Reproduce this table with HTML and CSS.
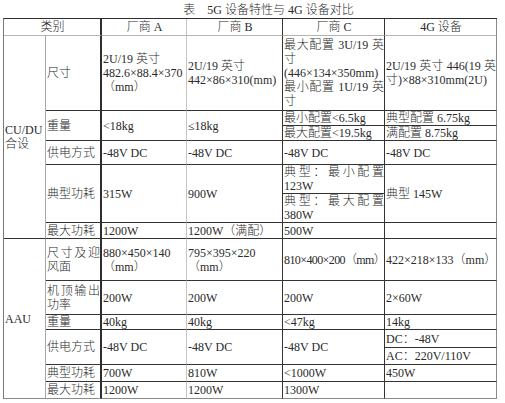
FILE: index.html
```html
<!DOCTYPE html>
<html lang="zh-CN">
<head>
<meta charset="utf-8">
<title>5G 设备特性与 4G 设备对比</title>
<link rel="stylesheet" href="styles.css">
</head>
<body>
<div class="page">
  <div class="title">表　5G 设备特性与 4G 设备对比</div>
  <table class="spec">
    <colgroup>
      <col class="c-cat"><col class="c-item"><col class="c-a"><col class="c-b"><col class="c-c"><col class="c-4g">
    </colgroup>
    <thead>
      <tr class="r-head">
        <th colspan="2" class="item">类别</th>
        <th class="va">厂商 A</th>
        <th class="vb">厂商 B</th>
        <th class="vc">厂商 C</th>
        <th class="v4">4G 设备</th>
      </tr>
    </thead>
    <tbody>
      <tr class="r-size">
        <td rowspan="7" class="cat">CU/DU<br>合设</td>
        <td class="item">尺寸</td>
        <td class="va">2U/19 英寸<br>482.6×88.4×370<br>（mm）</td>
        <td class="vb">2U/19 英寸<br>442×86×310(mm)</td>
        <td class="vc"><span class="just">最大配置 3U/19 英</span>寸<br>(446×134×350mm)<br><span class="just">最小配置 1U/19 英</span>寸</td>
        <td class="v4"><span class="just">2U/19 英寸 446(19 英</span>寸)×88×310mm(2U)</td>
      </tr>
      <tr class="r-w1">
        <td rowspan="2" class="item">重量</td>
        <td rowspan="2" class="va">&lt;18kg</td>
        <td rowspan="2" class="vb">≤18kg</td>
        <td class="vc">最小配置&lt;6.5kg</td>
        <td class="v4">典型配置 6.75kg</td>
      </tr>
      <tr class="r-w2">
        <td class="vc">最大配置&lt;19.5kg</td>
        <td class="v4">满配置 8.75kg</td>
      </tr>
      <tr class="r-pwr">
        <td class="item">供电方式</td>
        <td class="va">-48V DC</td>
        <td class="vb">-48V DC</td>
        <td class="vc">-48V DC</td>
        <td class="v4">-48V DC</td>
      </tr>
      <tr class="r-t1">
        <td rowspan="2" class="item">典型功耗</td>
        <td rowspan="2" class="va">315W</td>
        <td rowspan="2" class="vb">900W</td>
        <td class="vc"><span class="just">典型：最小配置</span>123W</td>
        <td rowspan="2" class="v4">典型 145W</td>
      </tr>
      <tr class="r-t2">
        <td class="vc"><span class="just">典型：最大配置</span>380W</td>
      </tr>
      <tr class="r-max">
        <td class="item">最大功耗</td>
        <td class="va">1200W</td>
        <td class="vb">1200W（满配）</td>
        <td class="vc">500W</td>
        <td class="v4"></td>
      </tr>
      <tr class="r-asize">
        <td rowspan="7" class="cat last">AAU</td>
        <td class="item"><span class="just">尺寸及迎</span>风面</td>
        <td class="va">880×450×140<br>（mm）</td>
        <td class="vb">795×395×220<br>（mm）</td>
        <td class="vc"><span class="tight">810×400×200（mm）</span></td>
        <td class="v4">422×218×133（mm）</td>
      </tr>
      <tr class="r-aout">
        <td class="item"><span class="just">机顶输出</span>功率</td>
        <td class="va">200W</td>
        <td class="vb">200W</td>
        <td class="vc">200W</td>
        <td class="v4">2×60W</td>
      </tr>
      <tr class="r-aw">
        <td class="item">重量</td>
        <td class="va">40kg</td>
        <td class="vb">40kg</td>
        <td class="vc">&lt;47kg</td>
        <td class="v4">14kg</td>
      </tr>
      <tr class="r-ap1">
        <td rowspan="2" class="item">供电方式</td>
        <td rowspan="2" class="va">-48V DC</td>
        <td rowspan="2" class="vb">-48V DC</td>
        <td rowspan="2" class="vc">-48V DC</td>
        <td class="v4">DC：-48V</td>
      </tr>
      <tr class="r-ap2">
        <td class="v4">AC：220V/110V</td>
      </tr>
      <tr class="r-at">
        <td class="item">典型功耗</td>
        <td class="va">700W</td>
        <td class="vb">810W</td>
        <td class="vc">&lt;1000W</td>
        <td class="v4">450W</td>
      </tr>
      <tr class="r-amax last-row">
        <td class="item">最大功耗</td>
        <td class="va">1200W</td>
        <td class="vb">1200W</td>
        <td class="vc">1300W</td>
        <td class="v4"></td>
      </tr>
    </tbody>
  </table>
</div>
</body>
</html>
```

FILE: styles.css
```css
html, body {
  margin: 0;
  padding: 0;
  background: #ffffff;
}

.page {
  width: 505px;
  padding: 0 0 0 3px;
  box-sizing: border-box;
  font-family: "Liberation Serif", "Noto Sans CJK SC", serif;
  font-size: 12px;
  font-weight: 300;
  line-height: 14px;
  color: #2a2a2a;
}

.title {
  padding: 3px 0 0 29px;
  height: 15px;
  line-height: 15px;
  text-align: center;
  white-space: nowrap;
}

.spec {
  border-collapse: separate;
  border-spacing: 0;
  table-layout: fixed;
  width: 494px;
  border-top: 1px solid #2e2e2e;
  border-left: 1px solid #7a7a7a;
}

.c-cat { width: 42px; }
.c-item { width: 56px; }
.c-a { width: 85px; }
.c-b { width: 96px; }
.c-c { width: 102px; }
.c-4g { width: 112px; }

.spec th,
.spec td {
  padding: 0 0 0 1px;
  border-right: 1px solid #333333;
  border-bottom: 1px solid #333333;
  font-weight: 300;
  vertical-align: middle;
  text-align: left;
  overflow: hidden;
}

.spec th {
  text-align: center;
  border-bottom-color: #b4b4b4;
}

.spec .cat {
  border-right-color: #a8a8a8;
}

.spec .item {
  border-right: 2px solid #2e2e2e;
}

.spec .va {
  border-right-color: #c4c4c4;
}

.spec .v4 {
  border-right-color: #8a8a8a;
}

.spec .last,
.last-row td {
  border-bottom-color: #8a8a8a;
}

.just {
  display: block;
  text-align: justify;
  text-align-last: justify;
}

.tight {
  white-space: nowrap;
  letter-spacing: -0.6px;
}

.r-head { height: 17px; }
.r-size { height: 75px; }
.r-w1 { height: 15px; }
.r-w2 { height: 15px; }
.r-pwr { height: 24px; }
.r-t1 { height: 28px; }
.r-t2 { height: 29px; }
.r-max { height: 16px; }
.r-asize { height: 42px; }
.r-aout { height: 34px; }
.r-aw { height: 14px; }
.r-ap1 { height: 18px; }
.r-ap2 { height: 17px; }
.r-at { height: 17px; }
.r-amax { height: 17px; }
```
